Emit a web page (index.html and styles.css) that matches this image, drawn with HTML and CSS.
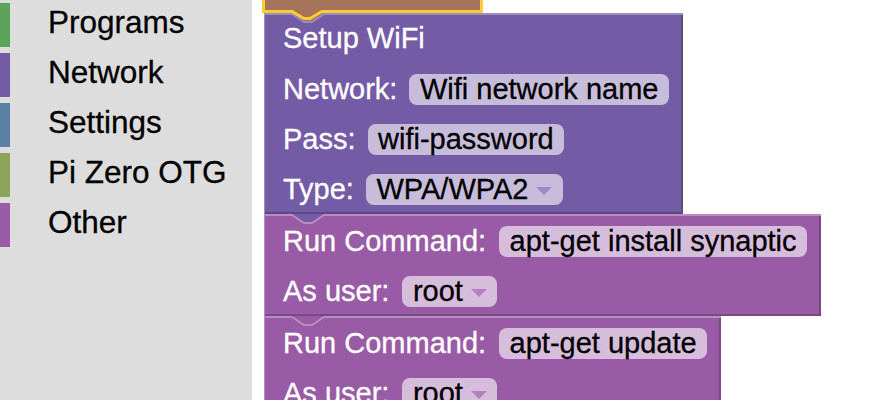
FILE: index.html
```html
<!DOCTYPE html>
<html>
<head>
<meta charset="utf-8">
<title>Blocks</title>
<link rel="stylesheet" href="styles.css">
</head>
<body>
<div class="app">
  <aside class="toolbox">
    <div class="cat cat-programs">Programs</div>
    <div class="cat cat-network">Network</div>
    <div class="cat cat-settings">Settings</div>
    <div class="cat cat-otg">Pi Zero OTG</div>
    <div class="cat cat-other">Other</div>
  </aside>
  <main class="workspace">
    <div class="stack">
      <div class="block block-brown selected">
        <svg class="tab" width="40" height="24" viewBox="0 0 40 24">
          <polygon points="5,10 17,17.5 23,17.5 35,10" fill="#a5745b"/>
          <polyline points="0,11.5 5,11.5 17,18.5 23,18.5 35,11.5 40,11.5" fill="none" stroke="#ffcc33" stroke-width="3"/>
        </svg>
      </div>
      <div class="block block-network">
        <svg class="notch" width="32" height="11" viewBox="0 0 32 11">
          <polygon class="notch-fill prev-brown" points="0,0 12,8 20,8 32,0"/>
          <polyline class="notch-line" points="0,1 12,9 20,9 32,1"/>
        </svg>
        <div class="row row-first"><span class="label">Setup WiFi</span></div>
        <div class="row"><span class="label">Network:</span><span class="field">Wifi network name</span></div>
        <div class="row"><span class="label">Pass:</span><span class="field">wifi-password</span></div>
        <div class="row"><span class="label">Type:</span><span class="field">WPA/WPA2<svg class="arrow" width="16" height="8" viewBox="0 0 16 8"><polygon points="0,0 16,0 8,8"/></svg></span></div>
      </div>
      <div class="block block-other">
        <svg class="notch" width="32" height="11" viewBox="0 0 32 11">
          <polygon class="notch-fill prev-network" points="0,0 12,8 20,8 32,0"/>
          <polyline class="notch-line" points="0,1 12,9 20,9 32,1"/>
        </svg>
        <div class="row"><span class="label">Run Command:</span><span class="field">apt-get install synaptic</span></div>
        <div class="row"><span class="label">As user:</span><span class="field">root<svg class="arrow" width="16" height="8" viewBox="0 0 16 8"><polygon points="0,0 16,0 8,8"/></svg></span></div>
      </div>
      <div class="block block-other">
        <svg class="notch" width="32" height="11" viewBox="0 0 32 11">
          <polygon class="notch-fill prev-other" points="0,0 12,8 20,8 32,0"/>
          <polyline class="notch-line" points="0,1 12,9 20,9 32,1"/>
        </svg>
        <div class="row"><span class="label">Run Command:</span><span class="field">apt-get update</span></div>
        <div class="row"><span class="label">As user:</span><span class="field">root<svg class="arrow" width="16" height="8" viewBox="0 0 16 8"><polygon points="0,0 16,0 8,8"/></svg></span></div>
      </div>
    </div>
  </main>
</div>
</body>
</html>
```
FILE: styles.css
```css
html, body {
  margin: 0;
  padding: 0;
  background: #fff;
}
body {
  font-family: "Liberation Sans", Arial, sans-serif;
  overflow: hidden;
}
.app {
  display: flex;
  height: 400px;
  overflow: hidden;
}

/* Toolbox */
.toolbox {
  width: 252px;
  flex: none;
  background: #dddddd;
  padding-top: 3px;
  box-sizing: border-box;
}
.cat {
  height: 44px;
  margin-bottom: 6px;
  border-left: 10px solid #000;
  padding-left: 38px;
  font-size: 31.5px;
  line-height: 39px;
  color: #000;
  box-sizing: border-box;
  white-space: nowrap;
  -webkit-text-stroke: 0.3px #000;
}
.cat-programs { border-left-color: #5ba55b; }
.cat-network { border-left-color: #745ba5; }
.cat-settings { border-left-color: #5b80a5; }
.cat-otg { border-left-color: #8da55b; }
.cat-other { border-left-color: #995ba5; }

/* Workspace */
.workspace {
  flex: 1;
  background: #fff;
  padding-left: 12px;
  overflow: hidden;
}
.stack {
  display: flex;
  flex-direction: column;
  align-items: flex-start;
}
.block {
  position: relative;
  box-sizing: border-box;
  padding: 0 14px 2px 19px;
  font-size: 29px;
}
.block-brown {
  z-index: 3;
  margin-left: -2px;
  width: 221px;
  height: 13px;
  padding: 0;
  background: #a5745b;
  border: 3px solid #ffcc33;
  border-top: 0;
}
.tab {
  position: absolute;
  left: 22px;
  top: 0;
  overflow: visible;
}
.block-network {
  z-index: 1;
  background: #745ba5;
  box-shadow: inset 0 2px 0 #9e8cc0, inset 1px 0 0 #9e8cc0, inset -2px 0 0 #5d4984, inset 0 -2px 0 #5d4984;
}
.block-other {
  z-index: 1;
  background: #995ba5;
  box-shadow: inset 0 2px 0 #b88cc0, inset 1px 0 0 #b88cc0, inset -2px 0 0 #7a4984, inset 0 -2px 0 #7a4984;
}
.notch {
  position: absolute;
  left: 28px;
  top: 0;
  overflow: visible;
}
.prev-brown { fill: #a5745b; }
.prev-network { fill: #745ba5; }
.prev-other { fill: #995ba5; }
.notch-line {
  fill: none;
  stroke-width: 2;
}
.block-network .notch-line { stroke: #9e8cc0; }
.block-other .notch-line { stroke: #b88cc0; }

.row {
  display: flex;
  align-items: flex-start;
  height: 50px;
  box-sizing: border-box;
  padding-top: 12px;
  gap: 13px;
}
.block-network .row { gap: 12px; }
.row-first {
  height: 49px;
  padding-top: 10px;
}
.label {
  color: #fff;
  line-height: 31px;
  white-space: nowrap;
  -webkit-text-stroke: 0.3px #fff;
}
.field {
  display: inline-flex;
  align-items: center;
  height: 31px;
  line-height: 31px;
  padding: 0 10.5px;
  border-radius: 8px;
  background: rgba(255, 255, 255, 0.6);
  color: #000;
  white-space: nowrap;
  -webkit-text-stroke: 0.3px #000;
}
.arrow {
  margin-left: 8px;
  margin-top: 2px;
  flex: none;
}
.block-network .arrow polygon { fill: #9a89c5; }
.block-other .arrow polygon { fill: #b67fbf; }
```
